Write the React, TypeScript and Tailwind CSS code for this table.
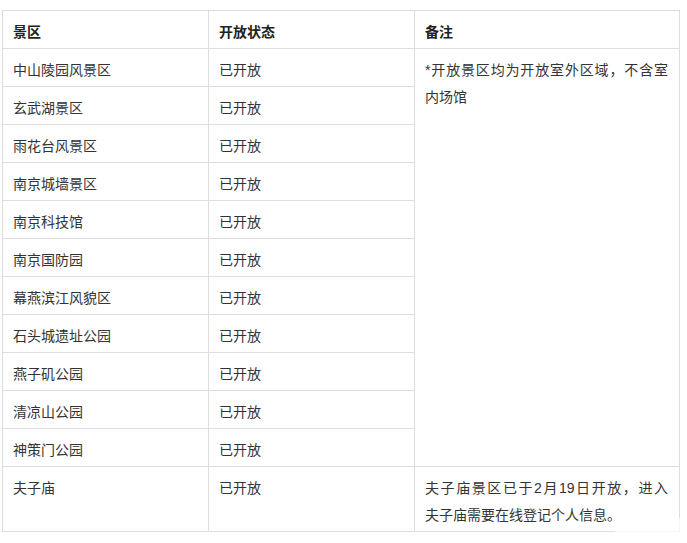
import React from 'react';

const rows = [
  '中山陵园风景区',
  '玄武湖景区',
  '雨花台风景区',
  '南京城墙景区',
  '南京科技馆',
  '南京国防园',
  '幕燕滨江风貌区',
  '石头城遗址公园',
  '燕子矶公园',
  '清凉山公园',
  '神策门公园',
];

const cell = 'border border-[#dddddd] align-top pl-[10px] pr-[11px] pt-[8px] pb-0 leading-[27px]';

export default function App() {
  return (
    <div className="relative w-[687px] h-[543px] bg-white text-[14px] text-[#333333] font-['Liberation_Sans','Noto_Sans_CJK_SC',sans-serif]">
      <div className="pt-[10px] pl-[2px]">
        <table className="table-fixed border-collapse w-[677px]">
          <colgroup>
            <col className="w-[206px]" />
            <col className="w-[206px]" />
            <col className="w-[265px]" />
          </colgroup>
          <thead>
            <tr className="h-[38px]">
              <th className={`${cell} text-left font-bold text-[#222222]`}>景区</th>
              <th className={`${cell} text-left font-bold text-[#222222]`}>开放状态</th>
              <th className={`${cell} text-left font-bold text-[#222222]`}>备注</th>
            </tr>
          </thead>
          <tbody>
            {rows.map((name, idx) => (
              <tr key={name} className="h-[38px]">
                <td className={cell}>{name}</td>
                <td className={cell}>已开放</td>
                {idx === 0 && (
                  <td rowSpan={11} className={`${cell} text-justify`}>
                    *开放景区均为开放室外区域，不含室内场馆
                  </td>
                )}
              </tr>
            ))}
            <tr className="h-[65px]">
              <td className={cell}>夫子庙</td>
              <td className={cell}>已开放</td>
              <td className={cell}>
                <span className="block text-justify [text-align-last:justify]">
                  夫子庙景区已于2月19日开放，进入
                </span>
                <span className="block">夫子庙需要在线登记个人信息。</span>
              </td>
            </tr>
          </tbody>
        </table>
      </div>
      {/* watermark fade over bottom right corner */}
      <div className="absolute left-[615px] top-[518px] w-[68px] h-[16px] bg-white/70" />
    </div>
  );
}
